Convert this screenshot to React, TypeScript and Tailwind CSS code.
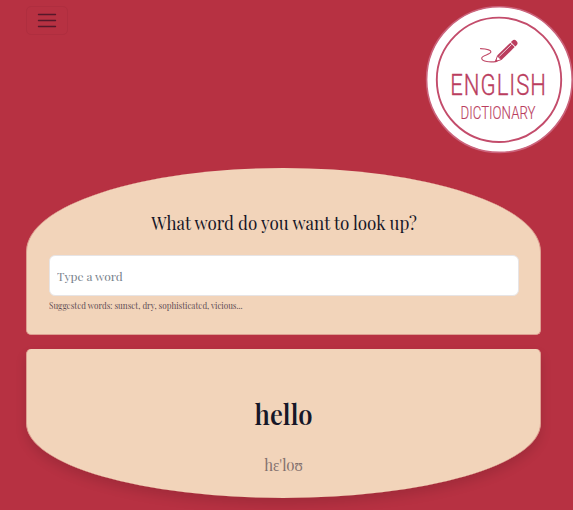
function Logo() {
  return (
    <svg className="h-[148px] w-[148px] shrink-0 overflow-visible" viewBox="0 0 148 148" role="img" aria-label="English Dictionary">
      <circle cx="74.4" cy="73.6" r="72.8" fill="#fff" stroke="#cb647c" strokeWidth="1.6" />
      <circle cx="74" cy="73.8" r="62.2" fill="none" stroke="#c34c6b" strokeWidth="1.9" />
      <path
        d="M55.5 42.6c4.6.2 10.400 1 10.400 3.200 0 2.800-9.700 3.600-9.200 6.600.5 3.200 8 4.200 15 3"
        fill="none"
        stroke="#c04a68"
        strokeWidth="1.100"
        strokeLinecap="round"
      />
      <g transform="translate(70 56) rotate(-44.300)" fill="#ba3d5e">
        <path d="M.5 0L6 -2.600V2.600z" fill="#fff" stroke="#ba3d5e" strokeWidth=".9" strokeLinejoin="round" />
        <path d="M0 0L2.800 -1.300V1.300z" />
        <rect x="6" y="-3.100" width="18.500" height="6.200" />
        <path d="M7 -1H24" stroke="#fff" strokeWidth=".7" />
        <path d="M25.300 -3.100h1.900a2.800 3.100 0 0 1 0 6.200h-1.900z" />
      </g>
      <g fill="#ba3d5e" stroke="#ba3d5e" fontFamily="Roboto, sans-serif" fontWeight="300">
        <text transform="translate(25.300 89.300) scale(.75 1)" fontSize="29.500" strokeWidth=".35" letterSpacing="1.300">ENGLISH</text>
        <text x="35.500" y="113" fontSize="19.200" strokeWidth=".15" textLength="75" lengthAdjust="spacingAndGlyphs">DICTIONARY</text>
      </g>
    </svg>
  );
}

export default function App() {
  return (
    <div className="h-[510px] w-full overflow-hidden bg-[#b73142] pl-[26px] font-['Playfair_Display','Liberation_Serif',serif] text-[#171728]">
      <header className="flex h-[168px] items-start justify-between pt-[6px]">
        <button aria-label="Menu" className="flex h-[29px] w-[42px] items-center justify-center rounded-[5px] border border-[#af2e3f]">
          <svg className="h-5 w-5" viewBox="0 0 20 20" fill="none" stroke="#56182a" strokeWidth="1.400" strokeLinecap="round">
            <path d="M1.500 3.500h17M1.500 9.500h17M1.500 15.500h17" />
          </svg>
        </button>
        <Logo />
      </header>
      <main className="flex w-[515px] flex-col gap-[14px]">
        <section className="h-[167px] rounded-[50%_50%_5px_5px] border-x border-b border-[#dd9f91] bg-[#f2d4ba] pl-[22px] pr-[21px] pt-[41px]">
          <h1 className="h-7 origin-center scale-x-[0.945] whitespace-nowrap text-center text-[18px] leading-7">What word do you want to look up?</h1>
          <input
            placeholder="Type a word"
            className="mt-[18px] block h-[41px] w-full rounded-[6px] border border-[#e7e4e5] bg-white px-[7px] pt-px text-[12px] outline-none placeholder:text-[#77818b]"
          />
          <p className="mt-[3px] origin-left scale-x-[0.955] whitespace-nowrap text-[8.500px] leading-[13px] text-[#5d4b53]">Suggested words: sunset, dry, sophisticated, vicious...</p>
        </section>
        <section className="h-[149px] rounded-[5px_5px_50%_50%] border-x border-[#dd9f91] bg-[#f2d4ba] pt-[45px] text-center shadow-[0_6px_12px_rgba(0,0,0,0.12)]">
          <h2 className="scale-x-[0.93] text-[27.500px] font-semibold leading-[40px]">hello</h2>
          <p className="mt-[20px] scale-x-[0.94] text-[16px] leading-[22px] text-[#83716e]">hɛ'loʊ</p>
        </section>
      </main>
    </div>
  );
}
